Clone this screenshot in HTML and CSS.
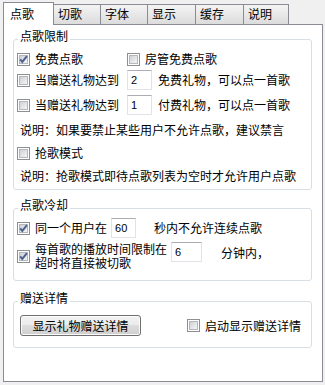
FILE: index.html
```html
<!DOCTYPE html>
<html>
    <head>
        <meta charset="utf-8">
        <link rel="stylesheet" href="styles.css">
    </head>
    <body>
        <div class="tabs">
            <div class="tab active w1">点歌</div>
            <div class="tab w2">切歌</div>
            <div class="tab w3">字体</div>
            <div class="tab w4">显示</div>
            <div class="tab w5">缓存</div>
            <div class="tab w6">说明</div>
        </div>
        <div class="panel">
            <fieldset class="group">
                <legend>点歌限制</legend>
                <div class="row r1">
                    <label class="check col1"><span class="box on"><svg width="13" height="13" viewBox="0 0 13 13"><path d="M3.2 6.4 L5.3 8.9 L9.9 3.2"/></svg></span>免费点歌</label>
                    <label class="check"><span class="box"></span>房管免费点歌</label>
                </div>
                <div class="row r2">
                    <label class="check col1"><span class="box"></span>当赠送礼物达到</label>
                    <input class="edit" type="text" value="2">
                    <span class="after">免费礼物，可以点一首歌</span>
                </div>
                <div class="row r3">
                    <label class="check col1"><span class="box"></span>当赠送礼物达到</label>
                    <input class="edit" type="text" value="1">
                    <span class="after">付费礼物，可以点一首歌</span>
                </div>
                <div class="row note n1">说明：如果要禁止某些用户不允许点歌，建议禁言</div>
                <div class="row r5">
                    <label class="check"><span class="box"></span>抢歌模式</label>
                </div>
                <div class="row note n2">说明：抢歌模式即待点歌列表为空时才允许用户点歌</div>
            </fieldset>

            <fieldset class="group g2">
                <legend>点歌冷却</legend>
                <div class="row c1">
                    <label class="check"><span class="box on"><svg width="13" height="13" viewBox="0 0 13 13"><path d="M3.2 6.4 L5.3 8.9 L9.9 3.2"/></svg></span>同一个用户在</label>
                    <input class="edit e60" type="text" value="60">
                    <span class="after a60">秒内不允许连续点歌</span>
                </div>
                <div class="row c2">
                    <span class="box on"><svg width="13" height="13" viewBox="0 0 13 13"><path d="M3.2 6.4 L5.3 8.9 L9.9 3.2"/></svg></span>
                    <label class="twoline">每首歌的播放时间限制在<br>超时将直接被切歌</label>
                    <input class="edit e6" type="text" value="6">
                    <span class="after a6">分钟内，</span>
                </div>
            </fieldset>

            <fieldset class="group g3">
                <legend>赠送详情</legend>
                <div class="row d1">
                    <button class="btn">显示礼物赠送详情</button>
                    <label class="check"><span class="box"></span>启动显示赠送详情</label>
                </div>
            </fieldset>
        </div>
    </body>
</html>
```

FILE: styles.css
```css
html, body {
    margin: 0;
    padding: 0;
}
body {
    background: #f0f0f0;
    font-family: "Noto Sans CJK SC", "Liberation Sans", sans-serif;
    font-size: 12px;
    line-height: 14px;
    color: #000;
    width: 325px;
    height: 385px;
    overflow: hidden;
}

/* tab strip */
.tabs {
    display: flex;
    align-items: flex-end;
    height: 24px;
    padding-left: 3px;
}
.tab {
    box-sizing: border-box;
    height: 20px;
    margin-left: -1px;
    padding: 2px 0 0 4px;
    border: 1px solid #898c95;
    border-bottom: none;
    background: linear-gradient(#f4f4f4, #e9e9e9 45%, #dcdcdc);
}
.tab.active {
    position: relative;
    z-index: 1;
    height: 23px;
    margin-left: 0;
    margin-bottom: -1px;
    padding: 4px 0 0 6px;
    background: #fff;
}
.w1 { width: 51px; }
.w2 { width: 48px; }
.w3 { width: 48px; }
.w4 { width: 49px; }
.w5 { width: 49px; }
.w6 { width: 46px; }

.panel {
    box-sizing: border-box;
    margin-left: 3px;
    width: 320px;
    height: 358px;
    border: 1px solid #898c95;
    background: #fff;
}

/* group boxes */
.group {
    margin: 4px 10px 0 9px;
    padding: 0 0 3px 3px;
    min-width: 0;
    border: 1px solid #d5dfe5;
    border-radius: 3px;
}
.group legend {
    margin-left: 1px;
    padding: 0 2px 6px;
    line-height: 14px;
}
.g2 {
    margin-top: 8px;
    padding-bottom: 10px;
}
.g3 {
    margin-top: 10px;
    padding-bottom: 11px;
}

.row {
    display: flex;
    align-items: center;
    height: 20px;
}
.r2 { height: 22px; }
.r3 { height: 22px; margin-top: 3px; }
.note { margin-left: 3px; }
.n1 { margin-top: 4px; }
.r5 { margin-top: 3px; }
.n2 { margin-top: 3px; }

.check {
    display: flex;
    align-items: center;
    gap: 5px;
}
.col1 { width: 110px; }

.box {
    position: relative;
    flex: none;
    box-sizing: border-box;
    width: 13px;
    height: 13px;
    padding: 1px;
    border: 1px solid #8e8f8f;
    background: #fff;
}
.box::before {
    content: "";
    display: block;
    box-sizing: border-box;
    width: 9px;
    height: 9px;
    border: 1px solid #b4b8bd;
    background: linear-gradient(135deg, #cdd0d5, #f6f6f6);
}
.box svg {
    position: absolute;
    left: -1px;
    top: -1px;
}
.box svg path {
    fill: none;
    stroke: #4d6290;
    stroke-width: 2;
}

.edit {
    box-sizing: border-box;
    width: 25px;
    height: 20px;
    margin: 0;
    padding: 0 3px;
    border: 1px solid #e2e3ea;
    border-top-color: #abadb3;
    font-family: "Liberation Sans", sans-serif;
    font-size: 11px;
    color: #000;
    background: #fff;
}
.after { margin-left: 6px; }

.c1 .edit.e60 { margin-left: 4px; }
.a60 { margin-left: 18px; }

.c2 {
    margin-top: 3px;
    height: 29px;
    align-items: flex-start;
}
.c2 .box { margin-top: 9px; }
.twoline {
    margin: 1px 0 0 5px;
    line-height: 14px;
}
.e6 {
    width: 31px;
    margin: 1px 0 0 4px;
}
.a6 {
    margin: 5px 0 0 19px;
}

.d1 {
    margin-top: 4px;
    height: 21px;
}
.btn {
    box-sizing: border-box;
    width: 121px;
    height: 21px;
    margin: 0 46px 0 3px;
    padding: 0;
    border: 1px solid #707070;
    border-radius: 3px;
    background: linear-gradient(#f2f2f2, #ebebeb 50%, #dddddd 50%, #cfcfcf);
    box-shadow: inset 0 0 0 1px #fbfbfb;
    font-family: "Noto Sans CJK SC", "Liberation Sans", sans-serif;
    font-size: 12px;
    color: #000;
}
```
